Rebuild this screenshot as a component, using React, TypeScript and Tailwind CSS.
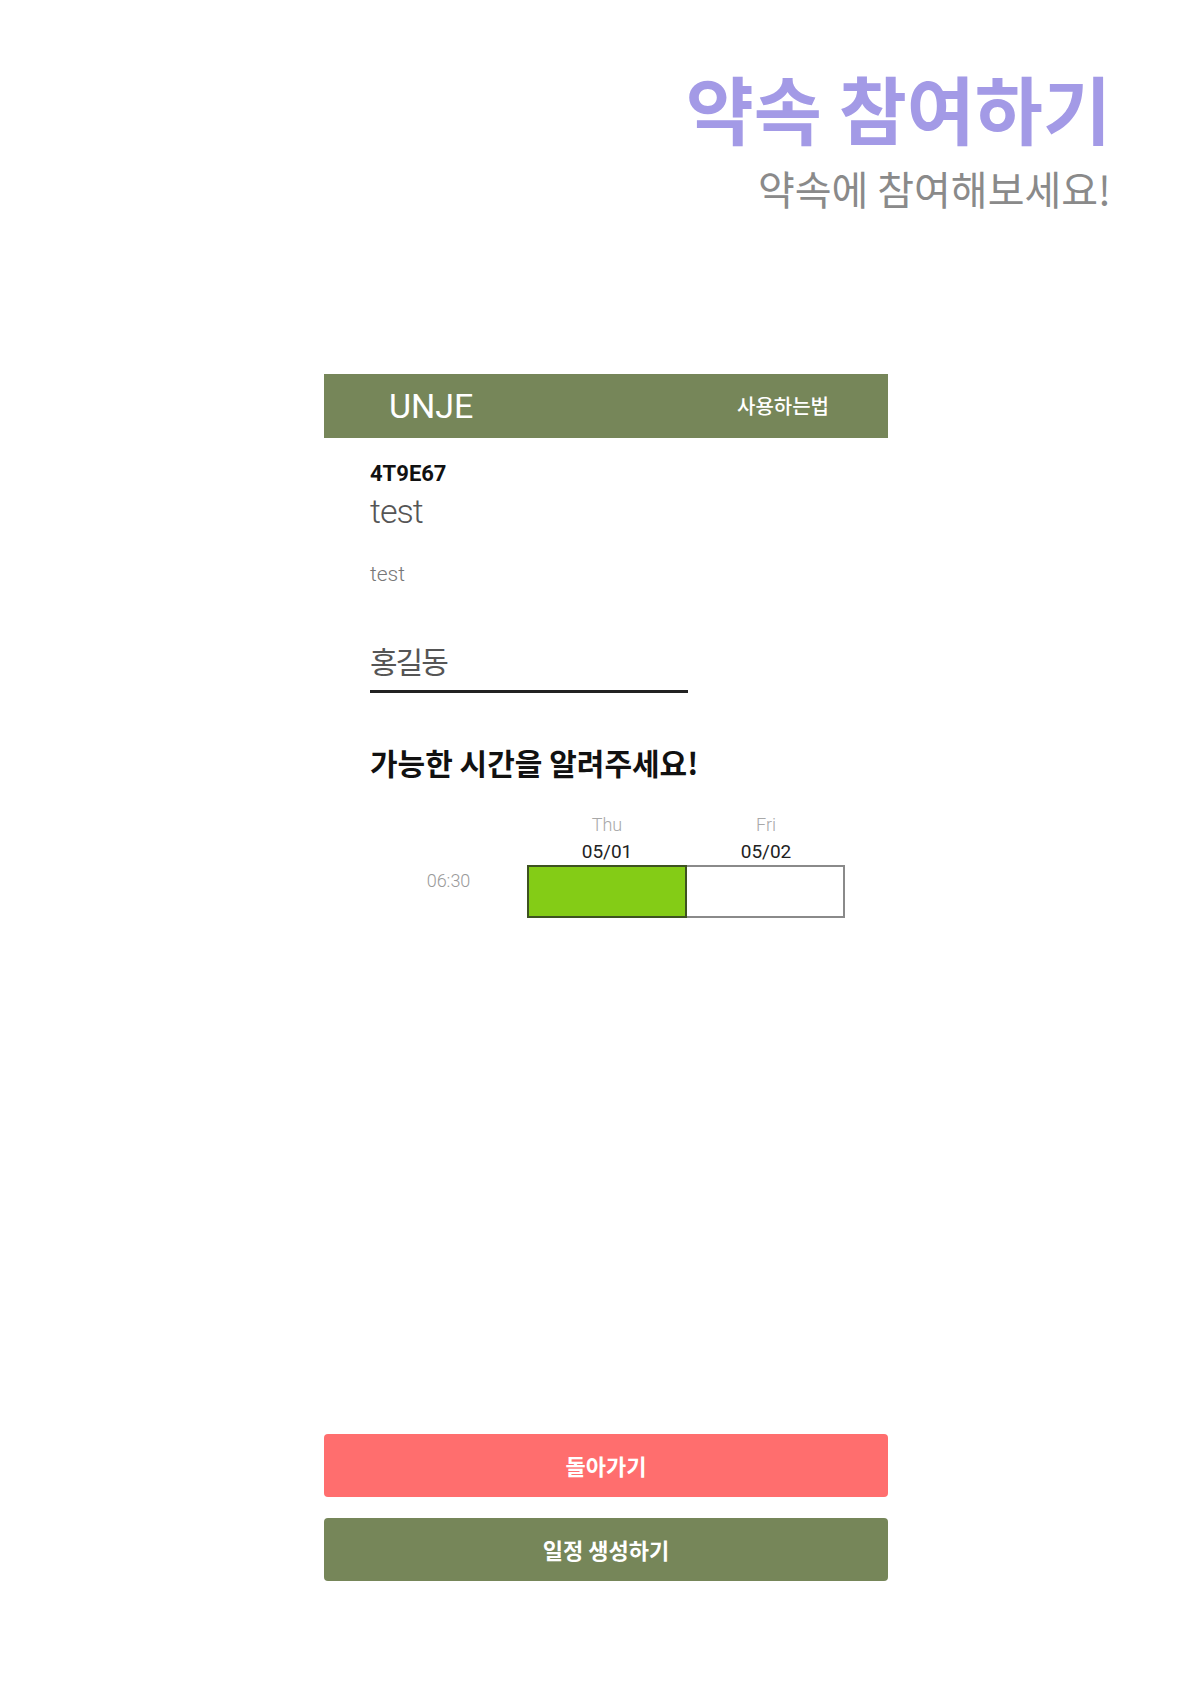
import React from 'react';

const ko = "font-['Noto_Sans_CJK_KR',sans-serif]";
const en = "font-['Roboto','Noto_Sans_CJK_KR',sans-serif]";

function TimeGrid() {
    return (
        <div className="grid grid-cols-[157px_160px_158px] mt-[34px]">
            {/* day row */}
            <div />
            <div className={`${en} text-[18px] leading-[28px] font-light text-[#a8a8a8] text-center`}>Thu</div>
            <div className={`${en} text-[18px] leading-[28px] font-light text-[#a8a8a8] text-center`}>Fri</div>

            {/* date row */}
            <div />
            <div className={`${en} text-[19px] leading-[26px] text-[#222] text-center`}>05/01</div>
            <div className={`${en} text-[19px] leading-[26px] text-[#222] text-center`}>05/02</div>

            {/* slot row */}
            <div className={`${en} text-[18px] leading-none font-light text-[#9a9a9a] text-center pt-[7px]`}>06:30</div>
            <div className="h-[53px] bg-[#84cc16] border-2 border-[#3d5220]" />
            <div className="h-[53px] bg-white border-2 border-l-0 border-[#8a8a8a]" />
        </div>
    );
}

export default function App() {
    return (
        <div className="w-full min-h-[1705px] bg-white">
            {/* Page title */}
            <div className="flex flex-col items-end pt-[70px] pr-[89px]">
                <h1 className={`${ko} text-[74px] leading-none font-bold text-[#a39ae6]`}>약속 참여하기</h1>
                <p className={`${ko} text-[40px] leading-none mt-[24px] text-[#8a8a8a]`}>약속에 참여해보세요!</p>
            </div>

            <div className="ml-[324px] w-[564px] mt-[166px]">
                {/* Top bar */}
                <div className="h-[64px] bg-[#768659] flex items-center justify-between pl-[65px] pr-[59px]">
                    <span className={`${en} text-[34px] leading-none text-white`}>UNJE</span>
                    <span className={`${ko} text-[20px] leading-none font-medium text-white`}>사용하는법</span>
                </div>

                {/* Event info */}
                <div className="pl-[46px] flex flex-col items-start">
                    <div className={`${en} text-[22px] leading-none font-bold text-[#111] mt-[25px]`}>4T9E67</div>
                    <div className={`${en} text-[34px] leading-none font-light tracking-[-1px] text-[#555] mt-[9px]`}>test</div>
                    <div className={`${en} text-[21px] leading-none font-light text-[#777] mt-[36px]`}>test</div>

                    <div className="mt-[60px] w-[318px] border-b-[3px] border-[#222] pb-[11px]">
                        <span className={`${ko} text-[30px] leading-none tracking-[-2px] text-[#555]`}>홍길동</span>
                    </div>

                    <h2 className={`${ko} text-[30px] leading-none font-bold text-[#111] mt-[54px]`}>가능한 시간을 알려주세요!</h2>

                    <TimeGrid />
                </div>

                {/* Actions */}
                <div className="flex flex-col gap-[21px] mt-[516px]">
                    <button className={`${ko} h-[63px] w-full rounded-[4px] bg-[#ff6e6e] text-white text-[22px] font-bold`}>
                        돌아가기
                    </button>
                    <button className={`${ko} h-[63px] w-full rounded-[4px] bg-[#768659] text-white text-[22px] font-bold`}>
                        일정 생성하기
                    </button>
                </div>
            </div>
        </div>
    );
}
